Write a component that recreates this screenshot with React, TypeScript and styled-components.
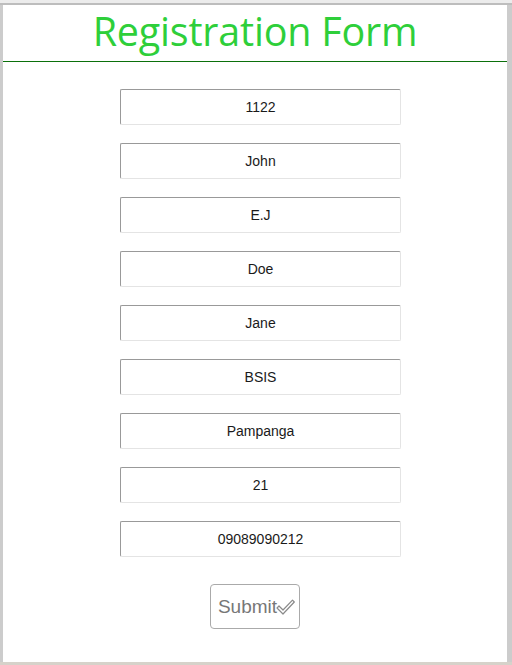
import styled, { createGlobalStyle } from "styled-components";

const fields = [
  "1122",
  "John",
  "E.J",
  "Doe",
  "Jane",
  "BSIS",
  "Pampanga",
  "21",
  "09089090212",
];

export default function App() {
  return (
    <>
      <Global />
      <Frame>
        <TopStrip />
        <Card>
          <Header>
            <Title>Registration Form</Title>
          </Header>
          <Form onSubmit={(e) => e.preventDefault()}>
            {fields.map((value, i) => (
              <Field key={i} defaultValue={value} />
            ))}
            <SubmitButton type="submit">
              Submit
              <CheckIcon />
            </SubmitButton>
          </Form>
        </Card>
      </Frame>
    </>
  );
}

function CheckIcon() {
  // hollow check mark drawn as an outline
  return (
    <svg width="19" height="17" viewBox="0 0 19 17" aria-hidden="true">
      <path
        d="M1 9 L3 7 L7 11 L16.5 1.2 L18.3 3 L7 15 Z"
        fill="#fff"
        stroke="#8a8a8a"
        strokeWidth="1.2"
        strokeLinejoin="round"
      />
    </svg>
  );
}

const Global = createGlobalStyle`
  html, body {
    margin: 0;
    padding: 0;
    background: #cccccc;
  }
  * { box-sizing: border-box; }
`;

const Frame = styled.div`
  width: 512px;
  height: 665px;
  display: flex;
  flex-direction: column;
  padding: 0 5px 0 3px;
  background: #cccccc;
  border-bottom: 3px solid #d6d2ca;
`;

const TopStrip = styled.div`
  height: 5px;
  margin: 0 -5px 0 -3px;
  background: #ececec;
  border-bottom: 2px solid #bdbdbd;
`;

const Card = styled.main`
  flex: 1;
  background: #ffffff;
  display: flex;
  flex-direction: column;
`;

const Header = styled.header`
  height: 57px;
  border-bottom: 1px solid #0b700b;
  display: flex;
  justify-content: center;
  align-items: center;
`;

const Title = styled.h1`
  margin: 0 0 2px;
  font-family: "Open Sans", "Noto Sans", sans-serif;
  font-weight: 400;
  font-size: 39.5px;
  line-height: 1;
  color: #2ecf3a;
  letter-spacing: -0.2px;
`;

const Form = styled.form`
  display: flex;
  flex-direction: column;
  align-items: center;
  gap: 18px;
  padding-top: 27px;
`;

const Field = styled.input`
  width: 281px;
  height: 36px;
  margin-left: 11px;
  border-style: solid;
  border-width: 1px;
  border-color: #999999 #e4e4e4 #e4e4e4 #999999;
  border-radius: 2px;
  background: #ffffff;
  text-align: center;
  font-family: "Liberation Sans", Arial, sans-serif;
  font-size: 14px;
  color: #1a1a1a;
  outline: none;
`;

const SubmitButton = styled.button`
  margin-top: 9px;
  width: 90px;
  height: 45px;
  display: flex;
  align-items: center;
  justify-content: center;
  padding: 0 0 0 3px;
  border: 1px solid #aaaaaa;
  border-radius: 4px;
  background: #ffffff;
  color: #777777;
  font-family: "Liberation Sans", Arial, sans-serif;
  font-size: 19px;
  cursor: pointer;

  svg {
    margin-left: -1px;
    margin-top: 1px;
  }
`;
